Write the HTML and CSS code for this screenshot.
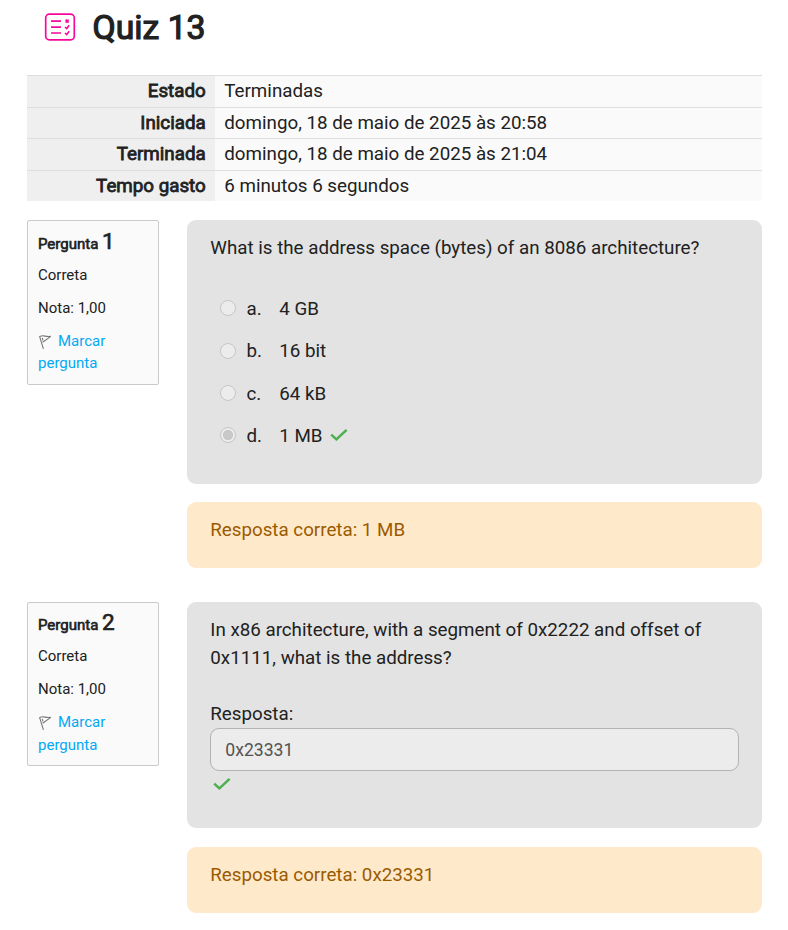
FILE: index.html
```html
<!DOCTYPE html>
<html lang="pt">
<head>
<meta charset="utf-8">
<title>Quiz 13</title>
<link rel="stylesheet" href="styles.css">
</head>
<body>
<svg width="0" height="0" class="sprite" aria-hidden="true">
  <symbol id="check" viewBox="0 0 18 14"><path d="M1.2 6.6 L6.4 11.4 L16.6 1.8" fill="none" stroke="#4caf50" stroke-width="2.5"/></symbol>
  <symbol id="flag" viewBox="0 0 16 18"><path d="M1.5 3.2 L5.4 15.8 M1.8 3.4 Q4.5 2.4 7 3.1 T12.8 3.4 L4.6 9.2 M4.2 4.8 L5 7.4" fill="none" stroke="#777" stroke-width="1.1"/></symbol>
</svg>
<header class="title">
  <svg class="quiz-icon" viewBox="0 0 32 28" fill="none" stroke="#f7089c" stroke-width="1.7">
    <rect x="1.7" y="1.2" width="28.6" height="25.6" rx="3.6"/>
    <path d="M7 8.2h10M7 14.2h10M7 20h10"/>
    <path d="M21.6 6.6l3 3M24.6 6.6l-3 3M21 14l1.7 1.5 2.5-3.3M21 20l1.7 1.5 2.5-3.3" stroke-width="1.6"/>
  </svg>
  <h1>Quiz 13</h1>
</header>
<main>
  <table class="summary">
    <tr><th>Estado</th><td>Terminadas</td></tr>
    <tr><th>Iniciada</th><td>domingo, 18 de maio de 2025 às 20:58</td></tr>
    <tr><th>Terminada</th><td>domingo, 18 de maio de 2025 às 21:04</td></tr>
    <tr><th>Tempo gasto</th><td>6 minutos 6 segundos</td></tr>
  </table>

  <section class="question">
    <aside class="info">
      <h3>Pergunta <span>1</span></h3>
      <p>Correta</p>
      <p>Nota: 1,00</p>
      <a><svg class="flag"><use href="#flag"/></svg>Marcar pergunta</a>
    </aside>
    <div class="content">
      <div class="formulation choice">
        <p class="text">What is the address space (bytes) of an 8086 architecture?</p>
        <div class="answers">
          <div class="answer"><i class="radio"></i><b>a.</b><span>4 GB</span></div>
          <div class="answer"><i class="radio"></i><b>b.</b><span>16 bit</span></div>
          <div class="answer"><i class="radio"></i><b>c.</b><span>64 kB</span></div>
          <div class="answer"><i class="radio checked"></i><b>d.</b><span>1 MB</span><svg class="check"><use href="#check"/></svg></div>
        </div>
      </div>
      <div class="outcome">Resposta correta: 1 MB</div>
    </div>
  </section>

  <section class="question">
    <aside class="info">
      <h3>Pergunta <span>2</span></h3>
      <p>Correta</p>
      <p>Nota: 1,00</p>
      <a><svg class="flag"><use href="#flag"/></svg>Marcar pergunta</a>
    </aside>
    <div class="content">
      <div class="formulation short">
        <p class="text">In x86 architecture, with a segment of 0x2222 and offset of 0x1111, what is the address?</p>
        <label>Resposta:</label>
        <div class="field">0x23331</div>
        <svg class="check"><use href="#check"/></svg>
      </div>
      <div class="outcome">Resposta correta: 0x23331</div>
    </div>
  </section>
</main>
</body>
</html>
```
FILE: styles.css
```css
* { box-sizing: border-box; margin: 0; padding: 0; }
html { overflow: hidden; }
body {
  background: #fff;
  color: #212121;
  font: 18.75px/28.125px Roboto, sans-serif;
}
.sprite { position: absolute; }
.title {
  display: flex;
  align-items: center;
  height: 55px;
  padding-left: 44px;
}
.quiz-icon { width: 32px; height: 28px; margin: -1px 16.5px 0 0; }
h1 {
  font-size: 33.75px;
  font-weight: 400;
  line-height: 42px;
  -webkit-text-stroke: 1.2px #212121;
}
main { padding: 20px 26px 0 27px; }
.summary {
  width: 100%;
  table-layout: fixed;
  border-collapse: collapse;
  background: #fafafa;
  margin-bottom: 19px;
}
.summary th, .summary td {
  height: 31.5px;
  border-top: 1px solid #dedede;
  padding: 0 9.3px;
  font-size: 18.75px;
  line-height: 30px;
}
.summary tr:last-child > * { height: 30.5px; line-height: 28px; padding-top: 1px; }
.summary th {
  width: 188px;
  background: #efefef;
  text-align: right;
  font-weight: 400;
  -webkit-text-stroke: .8px #212121;
}
.question { display: flex; align-items: flex-start; gap: 28px; height: 382px; }
.question:last-child { height: 311px; }
.info {
  width: 132px;
  height: 165px;
  flex: none;
  padding: 5px 10px;
  border: 1px solid #cacaca;
  border-radius: 2px;
  background: #fafafa;
  font-size: 15px;
  line-height: 22.5px;
}
.question:last-child .info { height: 164px; padding-top: 4.5px; }
.info h3 {
  font-size: 15px;
  font-weight: 400;
  line-height: 30px;
  -webkit-text-stroke: .65px #212121;
}
.info h3 span { font-size: 22.5px; }
.info p { margin: 0 0 10.5px; line-height: 22.5px; }
.info h3 + p { margin-top: 5px; }
.info a { display: block; color: #03a9f4; }
.flag { width: 16px; height: 18px; margin-right: 4px; vertical-align: -5px; }
.content { flex: 1; min-width: 0; }
.formulation {
  padding: 14px 23px;
  border-radius: 9px;
  background: #e3e3e3;
  margin-bottom: 18px;
}
.text, .short label { padding-left: .3px; }
.choice { height: 264px; }
.short { height: 226px; margin-bottom: 19px; }
.answers { margin-top: 26.1px; }
.answer { display: flex; align-items: center; height: 42.35px; padding-left: 10px; }
.answer b { width: 32.7px; font-weight: 400; }
.radio {
  width: 16px;
  height: 16px;
  margin: -1px 10.5px 0 0;
  border: 1px solid #c6c6c6;
  border-radius: 50%;
  background: #ececec;
}
.radio.checked { background: radial-gradient(circle, #c8c8c8 0 4.8px, #ececec 5.4px); }
.check { display: block; width: 18px; height: 14px; }
.answer .check { margin: -1px 0 0 7.5px; }
.short label { display: block; margin-top: 28px; }
.field {
  height: 43px;
  border: 1px solid #b3b3b3;
  border-radius: 9px;
  background: #ececec;
  color: #535353;
  padding: 0 14.3px;
  line-height: 42px;
  font-size: 17.6px;
}
.short .check { margin: 6px 0 0 3px; }
.outcome {
  height: 66px;
  padding: 14px 23.3px;
  border-radius: 9px;
  background: #ffe9cb;
  color: #9a5b00;
}
```
